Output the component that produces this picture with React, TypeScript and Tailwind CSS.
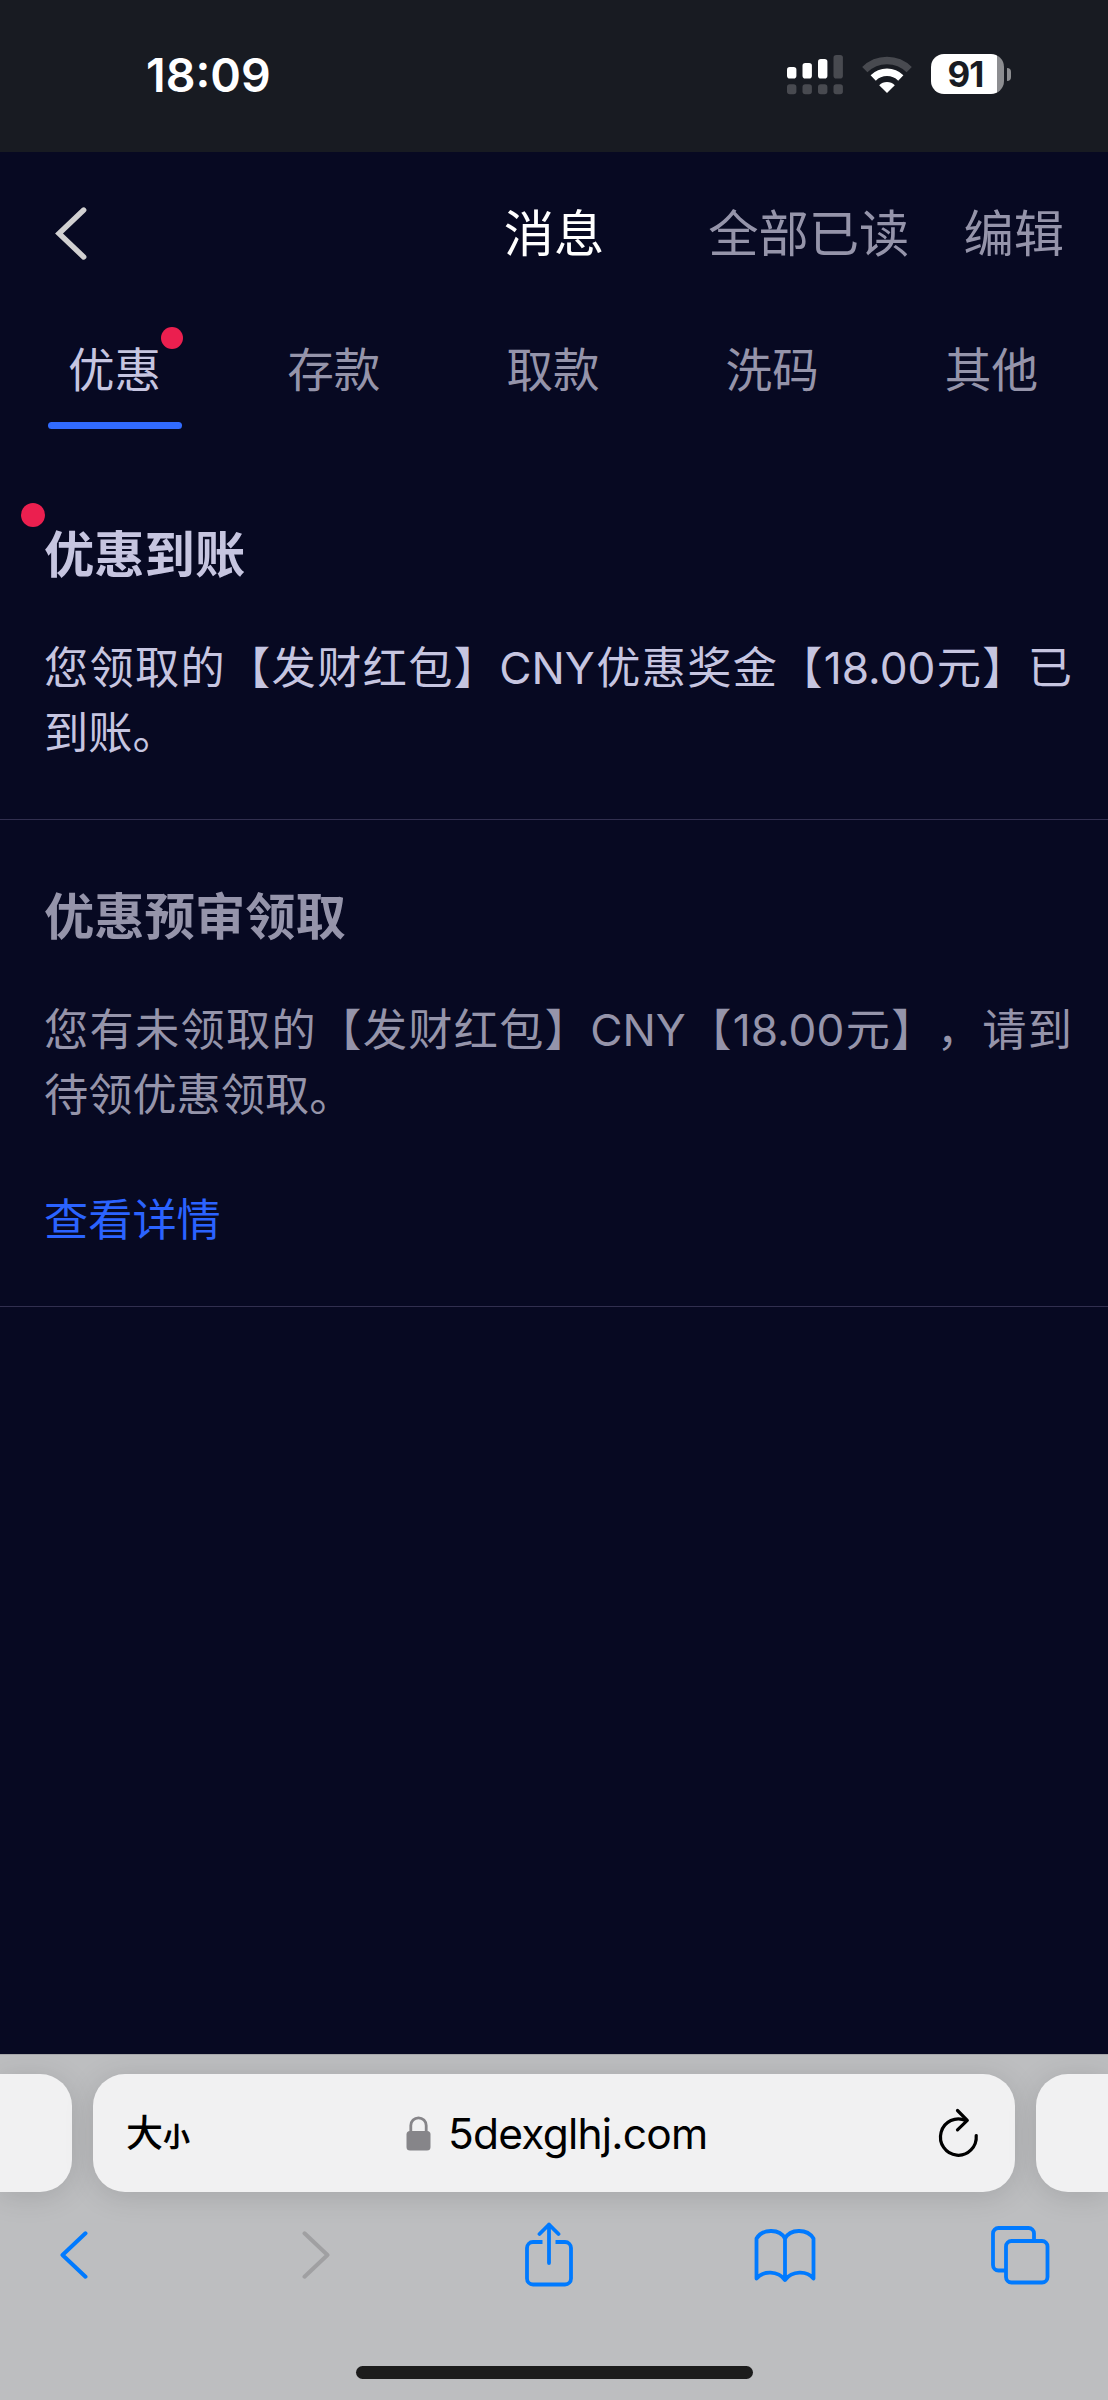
import React, { useState } from "react";

interface Message {
  id: number;
  title: string;
  body: string;
  unread?: boolean;
  link?: string;
}

const TABS = ["优惠", "存款", "取款", "洗码", "其他"];

const MESSAGES: Message[] = [
  {
    id: 1,
    title: "优惠到账",
    body: "您领取的【发财红包】CNY优惠奖金【18.00元】已到账。",
    unread: true,
  },
  {
    id: 2,
    title: "优惠预审领取",
    body: "您有未领取的【发财红包】CNY【18.00元】，请到待领优惠领取。",
    link: "查看详情",
  },
];

const SignalIcon = () => (
  <svg width="57" height="40" viewBox="0 0 57 40">
    <g fill="#fff">
      <rect x="0" y="12" width="9.4" height="11.5" rx="2.8" />
      <rect x="15.5" y="8" width="9.4" height="15.5" rx="2.8" />
      <rect x="31" y="4" width="9.4" height="19.5" rx="2.8" />
    </g>
    <g fill="#484a50">
      <rect x="46.5" y="0" width="9.4" height="23.5" rx="2.8" />
      <rect x="0" y="29.3" width="9.4" height="10" rx="2.8" />
      <rect x="15.5" y="29.3" width="9.4" height="10" rx="2.8" />
      <rect x="31" y="29.3" width="9.4" height="10" rx="2.8" />
      <rect x="46.5" y="29.3" width="9.4" height="10" rx="2.8" />
    </g>
  </svg>
);

const WifiIcon = () => (
  <svg width="50" height="38" viewBox="0 0 50 38" fill="none">
    <path d="M2.8 13.6a31.5 31.5 0 0 1 44.4 0" stroke="#484a50" strokeWidth="7.4" />
    <path d="M11.2 22a19.6 19.6 0 0 1 27.6 0" stroke="#fff" strokeWidth="7.4" />
    <path d="M17.2 29.2a11.2 11.2 0 0 1 15.6 0L25 37z" fill="#fff" />
  </svg>
);

const Chevron = ({ className, flip }: { className?: string; flip?: boolean }) => (
  <svg
    width="28"
    height="48"
    viewBox="0 0 28 48"
    className={className}
    fill="none"
    stroke="currentColor"
    strokeWidth="4"
    strokeLinecap="round"
    strokeLinejoin="round"
  >
    {flip ? <path d="M2.5 2.3 25.5 24 2.5 45.7" /> : <path d="M25.5 2.3 2.5 24l23 21.7" />}
  </svg>
);

const StatusBar = () => (
  <div className="flex h-[152px] items-start justify-between bg-[#181b22] pl-[146px] pr-[97px] pt-[54px] text-white">
    <span className="text-[46.5px] font-semibold leading-[43px]">18:09</span>
    <div className="flex items-start">
      <div className="pt-px">
        <SignalIcon />
      </div>
      <div className="ml-[18px] pt-0.5">
        <WifiIcon />
      </div>
      <div className="ml-[19px] flex items-center">
        <div className="flex h-10 w-[73px] items-center justify-center rounded-[13px] bg-linear-to-r from-white from-90% to-[#8c8d90] to-90%">
          <span className="pr-1 text-[35px] font-bold leading-10 tracking-[-1px] text-[#181b22]">91</span>
        </div>
        <div className="ml-[3px] h-[13px] w-1 rounded-r-full bg-[#8c8d90]" />
      </div>
    </div>
  </div>
);

const Header = () => (
  <header className="grid h-[160px] grid-cols-[1fr_auto_1fr] items-center pt-[3px] text-[50.3px] leading-[64px]">
    <button className="justify-self-start pl-[55px]">
      <svg
        width="32"
        height="53"
        viewBox="0 0 32 53"
        fill="none"
        stroke="#d1d0d1"
        strokeWidth="5.4"
        strokeLinecap="round"
      >
        <path d="M28.7 3 4 26.5 28.7 50" />
      </svg>
    </button>
    <h1 className="text-white">消息</h1>
    <div className="flex gap-[54px] justify-self-end pr-[44px] text-[#9594aa]">
      <button>全部已读</button>
      <button>编辑</button>
    </div>
  </header>
);

const MessageItem: React.FC<{ message: Message }> = ({ message }) => {
  const { title, body, unread, link } = message;
  return (
    <article
      className={`relative border-b border-[#312f4f] pb-[54px] pl-[44px] pr-[36px] pt-[65px] ${
        unread ? "text-[#c6c5e0]" : "text-[#9594aa]"
      }`}
    >
      {unread && <span className="absolute left-[21px] top-[45px] size-6 rounded-full bg-[#eb1f4f]" />}
      <h2 className="text-[50.3px] font-bold leading-[64px]">{title}</h2>
      <p className="mt-[49px] text-justify text-[44.2px] leading-[64.5px] [text-spacing-trim:space-all]">{body}</p>
      {link && (
        <a href="#" className="mt-[61px] block text-[44.2px] leading-[64px] text-[#2b63ff]">
          {link}
        </a>
      )}
    </article>
  );
};

const BrowserBar = () => (
  <footer className="flex h-[346px] flex-col overflow-hidden border-t border-[#a5a5a8] bg-[#bdbec0]">
    <div className="mt-[19px] flex h-[118px] gap-[21px]">
      <div className="w-[72px] rounded-r-[32px] bg-[#f1f1f2] shadow-[0_4px_30px_rgba(0,0,0,0.13)]" />
      <div className="flex w-[922px] items-center rounded-[32px] bg-[#f1f1f2] pl-[33px] pr-[36px] text-black shadow-[0_4px_30px_rgba(0,0,0,0.13)]">
        <div className="flex w-[280px] items-baseline pt-[5px] leading-[60px]">
          <span className="text-[37px] font-medium">大</span>
          <span className="text-[27px] font-bold">小</span>
        </div>
        <div className="flex items-center">
          <svg width="25" height="35" viewBox="0 0 25 35" className="mr-[17px]">
            <rect x="0.5" y="15" width="24" height="19.5" rx="3.5" fill="#868589" />
            <path d="M4.8 16V9.5a7.7 7.7 0 0 1 15.4 0V16" fill="none" stroke="#868589" strokeWidth="2.8" />
          </svg>
          <span className="pt-0.5 text-[42.5px] leading-[60px] tracking-[-0.8px]">5dexglhj.com</span>
        </div>
        <svg
          width="42"
          height="50"
          viewBox="0 0 42 50"
          className="ml-auto"
          fill="none"
          stroke="currentColor"
          strokeWidth="3.2"
          strokeLinecap="round"
          strokeLinejoin="round"
        >
          <path d="M39.2 27.5A17.9 18.2 0 1 1 29 12.600" />
          <path d="M20.500 2.500l9.800 9.900L20.500 21.800" />
        </svg>
      </div>
      <div className="w-[72px] rounded-l-[32px] bg-[#f1f1f2] shadow-[0_4px_30px_rgba(0,0,0,0.13)]" />
    </div>
    <nav className="mt-[30px] flex h-[66px] items-center pl-[60px] text-[#007aff]">
      <Chevron />
      <Chevron className="ml-[214px] text-[#a0a0a2]" flip />
      <svg
        width="50"
        height="66"
        viewBox="0 0 50 66"
        className="ml-[194px]"
        fill="none"
        stroke="currentColor"
        strokeWidth="3.8"
        strokeLinecap="round"
        strokeLinejoin="round"
      >
        <path d="M18.5 20H9a6 6 0 0 0-6 6v30.500a6 6 0 0 0 6 6h32a6 6 0 0 0 6-6V26a6 6 0 0 0-6-6h-9.500" strokeLinecap="butt" />
        <path d="M25 41V2.500M15.500 12 25 2.500l9.500 9.500" />
      </svg>
      <svg
        width="62"
        height="54"
        viewBox="0 0 62 54"
        className="ml-[180px]"
        fill="none"
        stroke="currentColor"
        strokeWidth="3.8"
        strokeLinecap="round"
        strokeLinejoin="round"
      >
        <path d="M31 10.500C26 1 9 0 2.500 10.500V50.500C9 42.500 24 42.500 31 52 38 42.500 53 42.500 59.500 50.500V10.500C53 0 36 1 31 10.500zM31 10.500V52" />
      </svg>
      <svg
        width="59"
        height="59"
        viewBox="0 0 59 59"
        className="ml-[175px]"
        fill="none"
        stroke="currentColor"
        strokeWidth="3.8"
      >
        <rect x="15" y="15" width="41.500" height="41.500" rx="5.500" />
        <path d="M15 44.500H7.500a5.500 5.500 0 0 1-5.500-5.500V7.500A5.500 5.500 0 0 1 7.500 2H37.500a5.500 5.500 0 0 1 5.500 5.500V15" />
      </svg>
    </nav>
    <div className="mx-auto mt-[78px] h-[13px] w-[397px] rounded-full bg-[#1c1c1c]" />
  </footer>
);

export default function App() {
  const [active, setActive] = useState(0);

  return (
    <div className="flex h-[2400px] w-[1108px] flex-col bg-[#070922] font-['Inter','Noto_Sans_CJK_SC',sans-serif]">
      <StatusBar />
      <Header />
      <nav className="grid h-[117px] grid-cols-5 pl-[5px] pr-[7px] text-[46.6px]">
        {TABS.map((tab, i) => (
          <button
            key={tab}
            onClick={() => setActive(i)}
            className={`relative flex items-center justify-center pt-px ${i === active ? "text-[#c6c5e0]" : "text-[#9594aa]"}`}
          >
            {tab}
            {i === 0 && <span className="absolute left-[156px] top-[15px] size-[22px] rounded-full bg-[#eb1f4f]" />}
            {i === active && (
              <span className="absolute bottom-0 left-1/2 h-[7px] w-[134px] -translate-x-1/2 rounded-full bg-[#316bff]" />
            )}
          </button>
        ))}
      </nav>
      <main className="mt-[29px] flex-1">
        {MESSAGES.map((m) => (
          <MessageItem key={m.id} message={m} />
        ))}
      </main>
      <BrowserBar />
    </div>
  );
}
